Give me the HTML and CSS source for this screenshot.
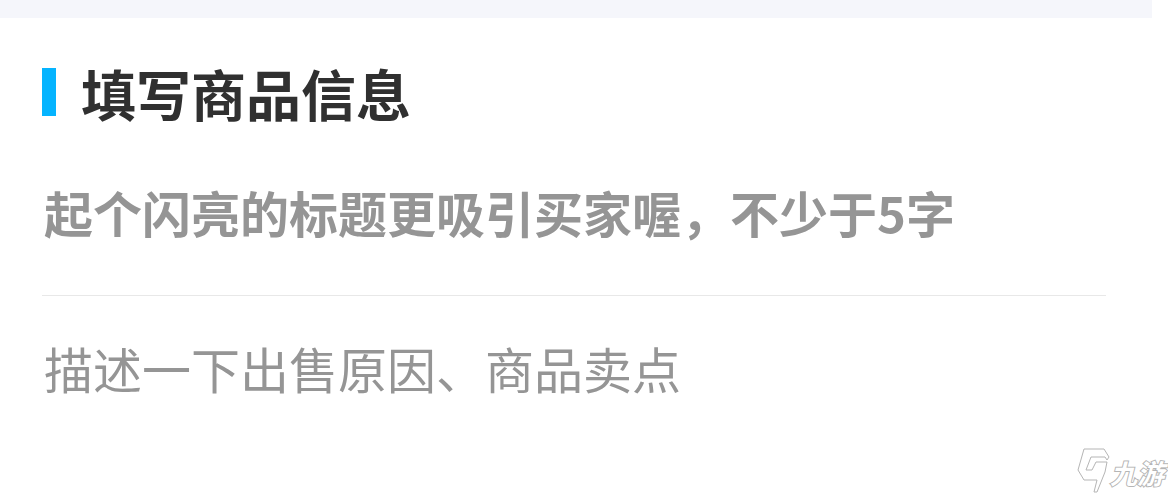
FILE: index.html
```
<!DOCTYPE html>
<html lang="zh-CN">
<head>
  <meta charset="UTF-8" />
  <meta name="viewport" content="width=device-width, initial-scale=1.0"/>
  <title>填写商品信息</title>
  <link rel="stylesheet" href="styles.css">
</head>
<body>

<div class="top-strip"></div>

<form class="goods-form">
  <h2>填写商品信息</h2>
  <input type="text" class="goods-title" name="title" aria-label="商品标题" minlength="5" placeholder="起个闪亮的标题更吸引买家喔，不少于5字" />
  <textarea class="goods-desc" name="desc" aria-label="商品描述" rows="1" placeholder="描述一下出售原因、商品卖点"></textarea>
</form>

<div class="watermark">
  <svg class="watermark-logo" viewBox="0 0 36 50" aria-hidden="true">
    <path d="M10 5 L30 5 L35 13 L33 16 L31 13 L17 13 L12 26 L18 26 L22 18 L33 18 L31 28 L23 48 L20 48 L23 36 L10 36 L4 26 Z" />
  </svg>
  <span class="watermark-name">九游</span>
</div>

</body>
</html>
```

FILE: styles.css
```
body {
  margin: 0;
  background: #fff;
  font-family: "Noto Sans CJK SC", sans-serif;
}

.top-strip {
  height: 18px;
  margin-right: 16px;
  background: #f5f6fb;
}

.goods-form {
  padding: 40px 62px 0 42px;
}

h2 {
  display: flex;
  align-items: center;
  gap: 25px;
  margin: 0;
  font-size: 55px;
  line-height: 68px;
  font-weight: bold;
  color: #303030;
}

h2::before {
  content: "";
  width: 14px;
  height: 48px;
  background: #05b4ff;
}

.goods-title,
.goods-desc {
  display: block;
  box-sizing: border-box;
  width: 100%;
  padding: 0 2px;
  border: none;
  outline: none;
  background: none;
  font-family: inherit;
  font-size: 49px;
  color: #303030;
}

.goods-title {
  height: 170px;
  padding-top: 2px;
  border-bottom: 1px solid #e8e8e8;
  font-weight: bold;
}

.goods-desc {
  margin-top: 34px;
  height: 76px;
  line-height: 76px;
  resize: none;
  overflow: hidden;
}

.goods-title::placeholder,
.goods-desc::placeholder {
  color: #959595;
  opacity: 1;
}

.watermark {
  position: absolute;
  right: 4px;
  bottom: 0;
  display: flex;
  align-items: center;
}

.watermark-logo {
  width: 36px;
  height: 50px;
  fill: #fff;
  stroke: #b5b5b5;
}

.watermark-name {
  padding-top: 8px;
  font-size: 27px;
  line-height: 40px;
  font-style: italic;
  font-weight: bold;
  color: #fff;
  -webkit-text-stroke: 2px #b5b5b5;
  paint-order: stroke fill;
}
```
